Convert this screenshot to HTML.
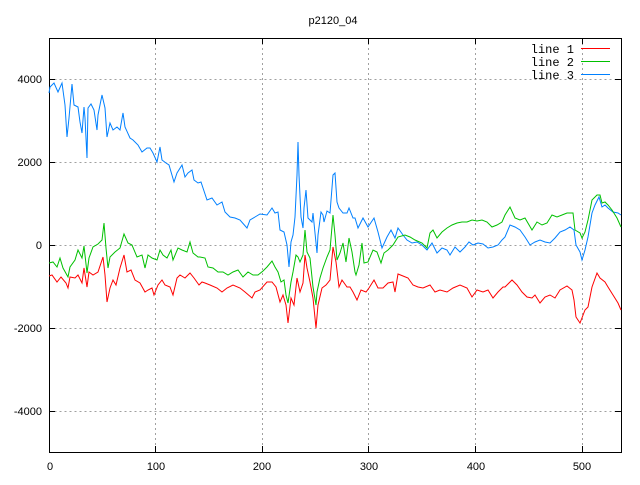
<!DOCTYPE html><html><head><style>body{margin:0;background:#fff}svg text{font-family:"Liberation Sans",sans-serif;font-size:11px;fill:#000}svg text.m{font-family:"Liberation Mono",monospace;font-size:12px}</style></head><body>
<svg width="640" height="480" xmlns="http://www.w3.org/2000/svg" shape-rendering="crispEdges">
<rect width="640" height="480" fill="#fff"/>
<g stroke="#a0a0a0" stroke-dasharray="2,3" stroke-width="1">
<path d="M49.5 79.5H621M49.5 162.5H621M49.5 245.5H621M49.5 328.5H621M49.5 411.5H621"/>
<path d="M155.5 38V452M262.5 38V452M368.5 38V452M475.5 38V452M582.5 38V452"/>
</g>
<g stroke="#000">
<rect x="49.5" y="38.5" width="572" height="414" fill="none"/>
<path d="M49 79.5h6M49 162.5h6M49 245.5h6M49 328.5h6M49 411.5h6M621 79.5h-6M621 162.5h-6M621 245.5h-6M621 328.5h-6M621 411.5h-6M155.5 452v-6M262.5 452v-6M368.5 452v-6M475.5 452v-6M582.5 452v-6M155.5 38v6M262.5 38v6M368.5 38v6M475.5 38v6M582.5 38v6"/>
</g>
<text x="333" y="24" text-anchor="middle">p2120_04</text>
<g text-anchor="end"><text x="42" y="83">4000</text><text x="42" y="166">2000</text><text x="42" y="249">0</text><text x="42" y="332">-2000</text><text x="42" y="415">-4000</text></g>
<g text-anchor="middle"><text x="50" y="470">0</text><text x="156" y="470">100</text><text x="262" y="470">200</text><text x="369" y="470">300</text><text x="476" y="470">400</text><text x="582" y="470">500</text></g>
<g text-anchor="end"><text class="m" x="574" y="53">line 1</text><text class="m" x="574" y="66">line 2</text><text class="m" x="574" y="79">line 3</text></g>
<g shape-rendering="auto" fill="none" stroke-width="1">
<path d="M581 48.5h29" stroke="#ff0000"/><path d="M581 61.5h29" stroke="#00c000"/><path d="M581 74.5h29" stroke="#0080ff"/>
<polyline stroke="#0080ff" points="49,93 50,87 54,83 58,92 62,83 65,105 67,137 69,118 72,84 74,105 78,107 80,122 82,133 84,107 85,118 87,158 88,108 91,104 94,110 97,130 98,115 102,95 105,108 107,137 110,123 113,130 117,127 120,130 123,113 125,127 130,138 133,140 138,145 142,152 147,148 150,148 153,153 157,162 160,147 162,160 166,163 169,165 174,182 177,173 182,165 185,177 188,173 192,170 194,180 198,183 201,182 203,188 207,200 212,198 217,205 222,202 225,212 230,217 235,218 240,220 247,228 250,220 255,217 260,214 267,215 272,208 275,213 278,212 280,230 284,232 287,245 289,267 291,242 293,235 295,217 297,175 298,142 299,175 301,217 303,228 304,208 306,190 308,218 312,222 313,213 316,243 317,253 318,235 321,212 323,215 324,222 327,211 330,213 333,175 335,173 337,202 339,208 343,213 347,213 349,208 353,218 355,218 358,228 363,218 368,227 374,218 378,232 382,248 387,237 391,230 395,238 398,228 403,235 407,240 412,243 417,242 422,245 427,250 432,243 437,253 442,248 447,250 450,255 455,247 460,252 465,247 469,242 473,245 478,243 483,244 488,248 493,247 498,245 502,240 505,237 510,225 515,227 520,230 525,237 530,245 535,242 540,240 545,242 550,243 555,238 560,232 565,230 570,227 574,230 576,245 580,252 582,260 585,250 588,237 592,213 595,205 599,197 602,207 605,205 608,208 613,212 618,213 621,215"/>
<polyline stroke="#00c000" points="49,263 53,262 57,267 60,258 63,268 68,277 70,267 75,260 78,250 82,258 84,246 87,273 89,258 93,247 98,244 102,240 104,223 106,248 108,268 110,257 115,252 120,248 124,234 128,243 132,245 137,257 142,255 145,268 148,255 152,258 157,260 160,250 163,255 167,258 171,250 173,260 178,248 182,250 187,252 190,242 193,253 198,257 200,257 205,258 208,267 213,268 218,272 223,272 228,275 233,272 238,270 243,277 248,272 253,275 258,275 263,271 267,267 272,261 275,267 278,272 281,282 284,280 286,295 288,303 291,282 293,272 296,255 298,257 300,262 303,255 305,230 307,252 310,258 313,287 316,305 317,292 320,278 323,268 327,257 330,250 333,215 335,235 337,260 340,253 343,243 346,262 349,238 352,252 355,272 356,275 359,265 362,243 364,263 368,262 373,250 377,252 381,263 384,253 388,250 393,245 398,237 405,235 410,237 415,240 422,243 427,248 430,233 433,230 437,238 442,232 447,228 452,225 457,223 462,222 467,222 472,220 477,221 482,220 487,222 492,227 497,225 502,222 505,215 510,207 515,218 520,220 525,218 532,230 537,222 542,225 547,223 552,215 557,217 562,215 567,213 573,213 575,230 580,233 582,238 585,232 588,220 592,200 597,195 600,195 602,203 605,202 608,205 612,210 617,218 621,227"/>
<polyline stroke="#ff0000" points="49,276 52,275 57,282 61,277 66,283 68,288 70,277 75,278 78,275 82,283 84,268 87,287 89,272 93,275 98,272 103,257 105,275 107,302 110,288 113,280 116,285 120,268 124,255 127,272 131,270 135,280 140,283 145,292 148,290 152,288 154,295 158,285 162,280 165,285 170,287 173,295 177,278 180,275 185,278 190,273 194,278 199,285 202,282 205,283 210,285 217,288 222,292 227,288 233,285 240,288 245,292 252,298 255,292 260,290 267,282 272,282 276,287 280,302 283,295 286,305 288,323 291,298 294,305 297,278 300,292 303,283 305,255 307,268 310,282 313,298 316,328 318,305 322,288 326,285 330,280 333,247 336,262 339,287 342,280 347,287 350,287 353,292 357,300 361,290 366,292 369,288 374,280 378,288 383,288 388,283 393,282 395,292 398,274 403,276 408,278 413,285 418,287 423,288 430,285 435,292 440,290 447,292 453,288 460,285 467,288 472,297 477,290 483,292 488,290 493,298 498,292 503,287 505,287 512,280 517,285 522,292 527,297 532,298 535,295 540,303 545,297 550,295 555,298 560,290 567,286 572,290 574,300 576,317 580,323 585,310 588,307 592,287 597,273 600,278 605,282 608,287 613,295 618,303 621,310"/>
</g>
</svg></body></html>
